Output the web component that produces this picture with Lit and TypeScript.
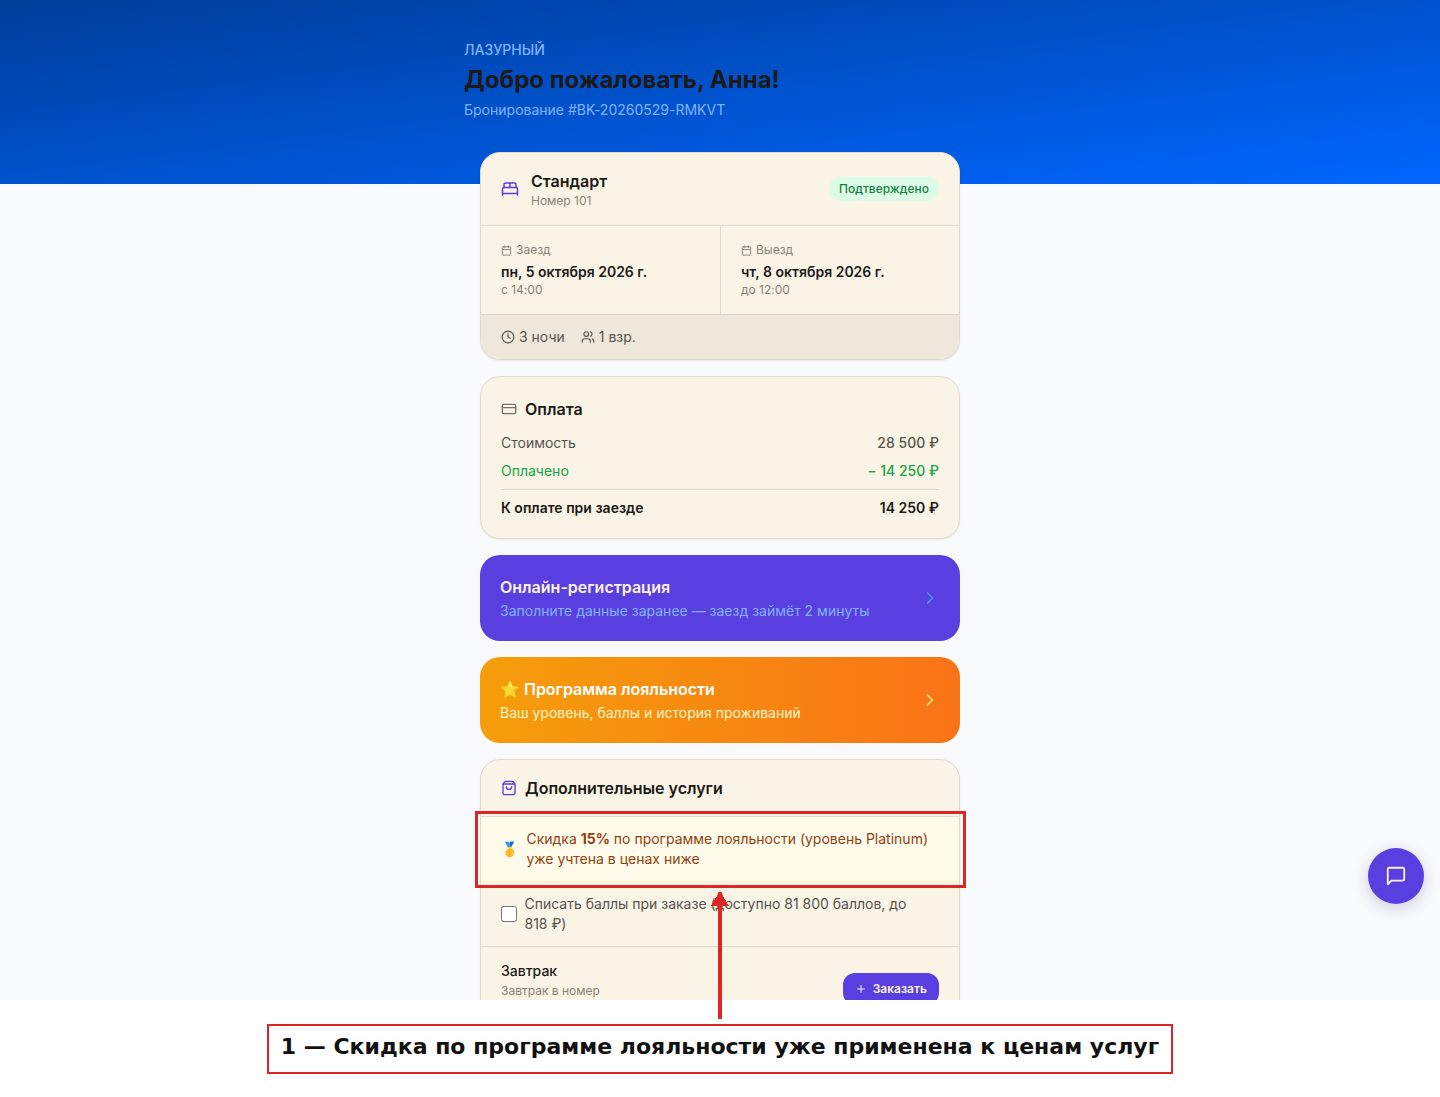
import { LitElement, html, css, svg } from "lit";
import { customElement, property } from "lit/decorators.js";

const ICONS: Record<string, unknown> = {
  bed: svg`<path d="M2 20v-8a2 2 0 0 1 2-2h16a2 2 0 0 1 2 2v8"/><path d="M4 10V6a2 2 0 0 1 2-2h12a2 2 0 0 1 2 2v4"/><path d="M12 4v6"/><path d="M2 18h20"/>`,
  calendar: svg`<path d="M8 2v4"/><path d="M16 2v4"/><rect width="18" height="18" x="3" y="4" rx="2"/><path d="M3 10h18"/>`,
  clock: svg`<circle cx="12" cy="12" r="10"/><path d="M12 6v6l4 2"/>`,
  users: svg`<path d="M16 21v-2a4 4 0 0 0-4-4H6a4 4 0 0 0-4 4v2"/><circle cx="9" cy="7" r="4"/><path d="M22 21v-2a4 4 0 0 0-3-3.87"/><path d="M16 3.13a4 4 0 0 1 0 7.75"/>`,
  card: svg`<rect width="20" height="14" x="2" y="5" rx="2"/><path d="M2 10h20"/>`,
  chevron: svg`<path d="m9 18 6-6-6-6"/>`,
  bag: svg`<path d="M16 10a4 4 0 0 1-8 0"/><path d="M3.103 6.034h17.794"/><path d="M3.4 5.467a2 2 0 0 0-.4 1.2V20a2 2 0 0 0 2 2h14a2 2 0 0 0 2-2V6.667a2 2 0 0 0-.4-1.2l-2-2.667A2 2 0 0 0 17 2H7a2 2 0 0 0-1.6.8z"/>`,
  plus: svg`<path d="M5 12h14"/><path d="M12 5v14"/>`,
  message: svg`<path d="M21 15a2 2 0 0 1-2 2H7l-4 4V5a2 2 0 0 1 2-2h14a2 2 0 0 1 2 2z"/>`,
};

@customElement("ui-icon")
export class UiIcon extends LitElement {
  @property() name = "";
  @property({ type: Number }) size = 16;

  static styles = css`
    :host {
      display: inline-flex;
      flex-shrink: 0;
    }
    .icon {
      display: block;
      fill: none;
      stroke: currentColor;
      stroke-width: 2;
      stroke-linecap: round;
      stroke-linejoin: round;
    }
  `;

  render() {
    return html`<svg class="icon" viewBox="0 0 24 24" width=${this.size} height=${this.size} aria-hidden="true">
      ${ICONS[this.name]}
    </svg>`;
  }
}

@customElement("app-root")
export class AppRoot extends LitElement {
  static styles = css`
    :host {
      --surface: #faf4e6;
      --line: #e2d9cb;
      --primary: #5a3fe0;
      --ink: #1c1917;
      --ink-2: #57534e;
      --ink-3: #8a8276;
      --mark: #dc2626;
      display: flex;
      flex-direction: column;
      height: 100vh;
      background: #fff;
      color: var(--ink);
      font-family: Inter, "Noto Color Emoji", sans-serif;
      font-size: 14px;
      line-height: 20px;
      text-rendering: optimizeSpeed;
    }
    * {
      box-sizing: border-box;
    }
    h1, h2, p, dl, dd, dt {
      margin: 0;
      font-size: inherit;
      font-weight: inherit;
    }
    .screen {
      position: relative;
      flex: 1;
      min-height: 0;
      overflow: hidden;
      background: #f9fafc;
    }
    .hero {
      padding: 40px 16px 64px;
      background: linear-gradient(to bottom right, #003d99 0%, #0052cc 50%, #0066ff 100%);
      color: #80b3ff;
    }
    .hero-inner {
      max-width: 512px;
      margin: 0 auto;
    }
    .brand {
      font-weight: 500;
    }
    .hero .greeting {
      margin: 4px 0;
      color: var(--ink);
      font-size: 24px;
      line-height: 32px;
      font-weight: 700;
    }
    .content {
      display: flex;
      flex-direction: column;
      gap: 16px;
      max-width: 512px;
      margin: -32px auto 0;
      padding: 0 16px;
      position: relative;
    }
    .card {
      border: 1px solid var(--line);
      border-radius: 20px;
      background: var(--surface);
      box-shadow: 0 1px 2px rgb(28 25 23 / 8%);
    }
    .row {
      display: flex;
      align-items: center;
    }
    .between {
      justify-content: space-between;
    }
    .small {
      font-size: 12px;
      line-height: 16px;
      color: var(--ink-3);
    }
    .room {
      gap: 12px;
      padding: 16px 20px;
      border-bottom: 1px solid var(--line);
    }
    .room-text {
      flex: 1;
    }
    .accent {
      color: var(--primary);
    }
    h2.title {
      font-size: 16px;
      line-height: 24px;
      font-weight: 600;
    }
    .badge {
      padding: 4px 10px;
      border-radius: 12px;
      background: #dcfce7;
      color: #15803d;
      font-size: 12px;
      line-height: 16px;
      font-weight: 500;
    }
    .dates {
      display: grid;
      grid-template-columns: 1fr 1fr;
    }
    .date {
      padding: 16px 20px;
    }
    .date + .date {
      border-left: 1px solid var(--line);
    }
    .date .row {
      gap: 4px;
      margin-bottom: 4px;
    }
    .date .value {
      font-weight: 600;
    }
    .facts {
      gap: 16px;
      padding: 12px 20px;
      border-top: 1px solid #dcd3c5;
      border-radius: 0 0 19px 19px;
      background: #efe7da;
      color: var(--ink-2);
    }
    .facts .row {
      gap: 4px;
    }
    .payment {
      padding: 20px;
    }
    .heading {
      gap: 8px;
    }
    .heading .muted {
      color: #78716c;
    }
    .sums {
      display: flex;
      flex-direction: column;
      gap: 8px;
      margin-top: 12px;
      color: var(--ink-2);
    }
    .sums .paid {
      color: #16a34a;
    }
    .sums .due {
      padding-top: 8px;
      border-top: 1px solid var(--line);
      color: var(--ink);
      font-weight: 600;
    }
    .cost dd,
    .paid dd {
      font-weight: 500;
    }
    .promo {
      padding: 20px;
      border-radius: 20px;
      text-decoration: none;
      background: var(--primary);
    }
    .promo .title {
      color: #faf3e5;
    }
    .promo .lead {
      margin-top: 2px;
      color: #80b3ff;
    }
    .promo ui-icon {
      color: #4d94ff;
    }
    .promo.loyalty {
      background: linear-gradient(90deg, #f59e0b, #f97316);
    }
    .loyalty .title {
      color: #fff;
    }
    .loyalty .lead {
      color: #fef3c7;
    }
    .loyalty ui-icon {
      color: #fde68a;
    }
    .services-head {
      padding: 16px 20px;
      border-bottom: 1px solid var(--line);
    }
    .discount {
      position: relative;
      gap: 8px;
      padding: 12px 20px;
      border-bottom: 1px solid #fef3c7;
      background: #fffbeb;
      color: #92400e;
    }
    .discount strong {
      font-weight: 700;
    }
    .marker {
      position: absolute;
      inset: -6px -7px -7px -6px;
      border: 3px solid var(--mark);
      pointer-events: none;
    }
    .points {
      gap: 8px;
      padding: 12px 20px;
      border-bottom: 1px solid var(--line);
      color: var(--ink-2);
    }
    .points .check {
      width: 16px;
      height: 16px;
      margin: 0;
    }
    .service {
      display: flex;
      align-items: flex-start;
      justify-content: space-between;
      padding: 14px 20px;
    }
    .service .name {
      margin-bottom: 2px;
      font-weight: 500;
    }
    .order {
      display: flex;
      align-items: center;
      gap: 6px;
      margin-top: 12px;
      padding: 8px 12px;
      border: 0;
      border-radius: 12px;
      background: var(--primary);
      color: #faf3e5;
      font: 600 12px/16px Inter, sans-serif;
      text-rendering: inherit;
    }
    .chat {
      position: absolute;
      right: 16px;
      bottom: 96px;
      display: flex;
      align-items: center;
      justify-content: center;
      width: 56px;
      height: 56px;
      padding: 0;
      border: 0;
      border-radius: 50%;
      background: var(--primary);
      color: #faf3e5;
      box-shadow: 0 4px 16px rgb(28 25 80 / 20%);
    }
    .note {
      display: flex;
      justify-content: center;
      padding: 24px 16px 23px;
    }
    .note-box {
      position: relative;
      padding: 8px 12px 12px;
      border: 2px solid var(--mark);
      color: #111;
      font: 700 22px/26px "DejaVu Sans", sans-serif;
    }
    .arrow {
      position: absolute;
      left: 50%;
      bottom: calc(100% + 7px);
      width: 18px;
      height: 127px;
      margin-left: -9px;
      fill: var(--mark);
    }
  `;

  private date(label: string, value: string, time: string) {
    return html`<div class="date">
      <p class="row small"><ui-icon name="calendar" .size=${11}></ui-icon>${label}</p>
      <p class="value">${value}</p>
      <p class="small">${time}</p>
    </div>`;
  }

  private sum(kind: string, label: string, value: string) {
    return html`<div class="row between ${kind}"><dt>${label}</dt><dd>${value}</dd></div>`;
  }

  private promo(kind: string, title: string, lead: string) {
    return html`<a class="promo row between ${kind}" href="#">
      <div>
        <h2 class="title">${title}</h2>
        <p class="lead">${lead}</p>
      </div>
      <ui-icon name="chevron" .size=${20}></ui-icon>
    </a>`;
  }

  render() {
    return html`
      <div class="screen">
        <header class="hero">
          <div class="hero-inner">
            <p class="brand">ЛАЗУРНЫЙ</p>
            <h1 class="greeting">Добро пожаловать, Анна!</h1>
            <p>Бронирование #BK-20260529-RMKVT</p>
          </div>
        </header>
        <main class="content">
          <section class="card">
            <div class="row room">
              <ui-icon class="accent" name="bed" .size=${18}></ui-icon>
              <div class="room-text">
                <h2 class="title">Стандарт</h2>
                <p class="small">Номер 101</p>
              </div>
              <span class="badge">Подтверждено</span>
            </div>
            <div class="dates">
              ${this.date("Заезд", "пн, 5 октября 2026 г.", "с 14:00")}
              ${this.date("Выезд", "чт, 8 октября 2026 г.", "до 12:00")}
            </div>
            <div class="row facts">
              <span class="row"><ui-icon name="clock" .size=${14}></ui-icon>3 ночи</span>
              <span class="row"><ui-icon name="users" .size=${14}></ui-icon>1 взр.</span>
            </div>
          </section>

          <section class="card payment">
            <div class="row heading">
              <ui-icon class="muted" name="card" .size=${16}></ui-icon>
              <h2 class="title">Оплата</h2>
            </div>
            <dl class="sums">
              ${this.sum("cost", "Стоимость", "28 500 ₽")}
              ${this.sum("paid", "Оплачено", "− 14 250 ₽")}
              ${this.sum("due", "К оплате при заезде", "14 250 ₽")}
            </dl>
          </section>

          ${this.promo("", "Онлайн-регистрация", "Заполните данные заранее — заезд займёт 2 минуты")}
          ${this.promo("loyalty", "⭐ Программа лояльности", "Ваш уровень, баллы и история проживаний")}

          <section class="card">
            <div class="row heading services-head">
              <ui-icon class="accent" name="bag" .size=${16}></ui-icon>
              <h2 class="title">Дополнительные услуги</h2>
            </div>
            <div class="row discount">
              <span>🥇</span>
              <p>Скидка <strong>15%</strong> по программе лояльности (уровень Platinum) уже учтена в ценах ниже</p>
              <div class="marker"></div>
            </div>
            <label class="row points">
              <input class="check" type="checkbox" />
              <span>Списать баллы при заказе (доступно 81&nbsp;800 баллов, до 818&nbsp;₽)</span>
            </label>
            <div class="service">
              <div>
                <p class="name">Завтрак</p>
                <p class="small">Завтрак в номер</p>
              </div>
              <button class="order" type="button"><ui-icon name="plus" .size=${12}></ui-icon>Заказать</button>
            </div>
          </section>
        </main>
        <button class="chat" type="button" aria-label="Чат"><ui-icon name="message" .size=${22}></ui-icon></button>
      </div>
      <footer class="note">
        <div class="note-box">
          1 — Скидка по программе лояльности уже применена к ценам услуг
          <svg class="arrow" viewBox="0 0 18 127" shape-rendering="crispEdges" aria-hidden="true">
            <path d="M7 0h4v127H7z" />
            <path d="M9 -1L18 14H0z" />
          </svg>
        </div>
      </footer>
    `;
  }
}
